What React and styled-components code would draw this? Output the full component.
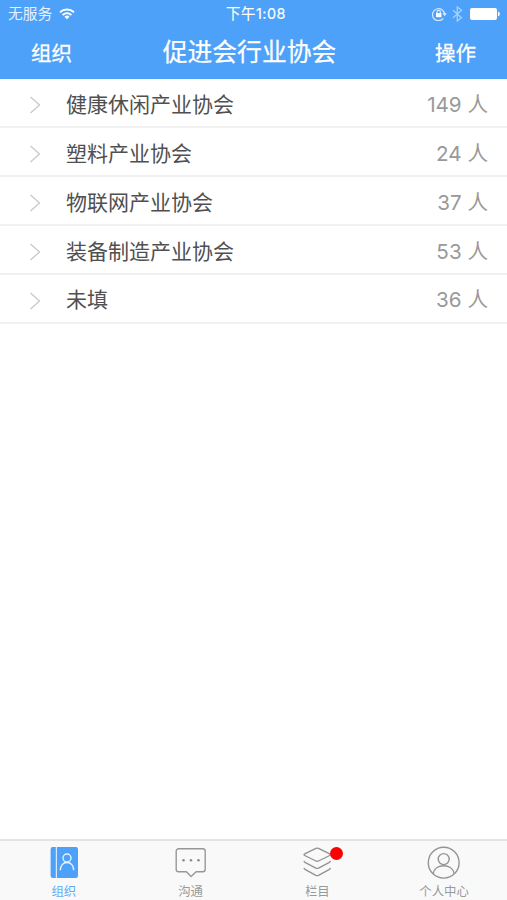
import React from "react";
import styled, { createGlobalStyle } from "styled-components";

const GlobalStyle = createGlobalStyle`
  * { box-sizing: border-box; }
  body {
    margin: 0;
    background: #fff;
    font-family: Inter, "Noto Sans CJK SC", sans-serif;
  }
`;

const Screen = styled.div`
  display: flex;
  flex-direction: column;
  width: 507px;
  height: 900px;
  overflow: hidden;
  background: #fff;
`;

const Header = styled.header`
  height: 79.4px;
  flex: none;
  background: #4ea1f9;
  color: #fff;
`;

const StatusBar = styled.div`
  display: grid;
  grid-template-columns: 1fr auto 1fr;
  align-items: center;
  height: 28px;
  padding: 0 7px 0 8px;
  font-size: 14.7px;
  line-height: 28px;
`;

const Carrier = styled.div`
  display: flex;
  align-items: center;
  gap: 7px;
  color: #e6f2ff;
  svg { margin-bottom: 2px; }
`;

const Clock = styled.div`
  font-size: 14.4px;
  font-weight: 400;
  letter-spacing: 0.5px;
  -webkit-text-stroke: 0.15px #fff;
  padding-left: 4px;
`;

const StatusIcons = styled.div`
  display: flex;
  align-items: center;
  justify-content: flex-end;
  padding-bottom: 1px;
`;

const NavBar = styled.div`
  display: grid;
  grid-template-columns: 1fr auto 1fr;
  align-items: center;
  height: 48px;
  padding: 0 31px;
`;

const NavAction = styled.div`
  padding-top: 2px;
  font-size: 20.5px;
  font-weight: 400;
  line-height: 48px;
  -webkit-text-stroke: 0.3px #fff;
  text-align: ${(p) => p.$align};
`;

const Title = styled.h1`
  margin: 0;
  padding: 0 8px 2px 0;
  font-size: 24.8px;
  font-weight: 400;
  line-height: 48px;
  -webkit-text-stroke: 0.25px #fff;
`;

const List = styled.ul`
  flex: 1;
  margin: 0;
  padding: 0;
  list-style: none;
`;

const Row = styled.li`
  display: flex;
  align-items: center;
  height: 48.9px;
  padding: 0 19px 0 29px;
  border-bottom: 2px solid #f1f1f1;
`;

const Chevron = styled.svg`
  flex: none;
  width: 12px;
  height: 18px;
  margin: 5px 25px 0 0;
`;

const Name = styled.span`
  flex: 1;
  padding-top: 3px;
  color: #505050;
  font-size: 21px;
  line-height: 43px;
`;

const Count = styled.span`
  padding-top: 3px;
  color: #999;
  font-size: 20.6px;
  line-height: 43px;
`;

const TabBar = styled.nav`
  display: grid;
  grid-template-columns: repeat(4, 1fr);
  flex: none;
  height: 61px;
  background: #f9f9f9;
  border-top: 2px solid #e4e4e4;
`;

const Tab = styled.div`
  display: flex;
  flex-direction: column;
  align-items: center;
  padding: 4px 0 0 1px;
  color: ${(p) => (p.$active ? "#62abf8" : "#999")};
  font-size: 12.4px;
  line-height: 22px;
`;

const IconBox = styled.div`
  position: relative;
  width: 36px;
  height: 36px;
  svg { display: block; }
`;

const Badge = styled.span`
  position: absolute;
  top: 2px;
  right: -8px;
  width: 13px;
  height: 13px;
  border-radius: 50%;
  background: #fe0000;
`;

const WifiIcon = () => (
  <svg width="16" height="13" viewBox="0 0 16 13" fill="none" stroke="#fff" strokeWidth="1.9">
    <path d="M1 5.2a10.3 10.3 0 0 1 14 0M3.6 8a6.6 6.6 0 0 1 8.8 0" />
    <path d="M8 12.2 5.5 9.7a3.6 3.6 0 0 1 5 0Z" fill="#fff" stroke="none" />
  </svg>
);

const LockIcon = () => (
  <svg width="15" height="14" viewBox="0 0 15 14" fill="none" stroke="#d5eaff" strokeWidth="1.2">
    <path d="M11.2 11.4A6 6 0 1 1 12.5 7.6" />
    <path d="m10.4 6.3 4.4 0-2.2 3Z" fill="#d5eaff" stroke="none" />
    <rect x="4" y="6" width="5.4" height="4.2" fill="#fff" stroke="none" />
    <path d="M5 6.4V5a1.7 1.7 0 0 1 3.4 0v1.4" />
  </svg>
);

const BluetoothIcon = () => (
  <svg width="11" height="16" viewBox="0 0 11 16" fill="none" stroke="#a5d0fd" strokeWidth="1.3">
    <path d="m1 4.3 8.5 7.4L5.3 15V1l4.2 3.3L1 11.7" />
  </svg>
);

const BatteryIcon = () => (
  <svg width="30" height="12" viewBox="0 0 30 12" fill="#fff">
    <rect width="27" height="12" rx="2" />
    <path d="M28 3.6q1.8.5 1.8 2.4T28 8.4Z" />
  </svg>
);

const BatterySlot = styled.span`
  display: flex;
  margin-left: 7px;
`;

const BluetoothSlot = styled.span`
  display: flex;
  margin-left: 5px;
`;

const ContactsIcon = () => (
  <svg width="36" height="36" viewBox="0 0 36 36" fill="none">
    <rect x="4.6" y="2" width="27.4" height="31" rx="2.2" fill="#4ea1f9" />
    <path d="M10.4 2v31" stroke="#d5eaff" strokeWidth="1.2" />
    <circle cx="21" cy="13" r="4" stroke="#e6f3ff" strokeWidth="1.4" />
    <path d="M14.3 25.2c0-4.6 2.8-7.7 6.7-7.7s6.7 3.1 6.7 7.7" stroke="#e6f3ff" strokeWidth="1.4" />
  </svg>
);

const ChatIcon = () => (
  <svg width="36" height="36" viewBox="0 0 36 36" fill="none" stroke="#989898" strokeWidth="1.4">
    <path d="M5.7 3.7h24a2.500 2.500 0 0 1 2.500 2.500v18a2.500 2.500 0 0 1-2.500 2.500h-6.500L18.100 31.500l-4.700-4.800H5.700a2.500 2.500 0 0 1-2.500-2.500v-18a2.500 2.500 0 0 1 2.500-2.500Z" strokeLinejoin="round" />
    <g fill="#8c8c8c" stroke="none">
      <circle cx="10.500" cy="15.200" r="1.300" />
      <circle cx="18" cy="15.200" r="1.300" />
      <circle cx="25.500" cy="15.200" r="1.300" />
    </g>
  </svg>
);

const LayersIcon = () => (
  <svg width="36" height="36" viewBox="0 0 36 36" fill="none" stroke="#929292" strokeWidth="1.35" strokeLinejoin="round">
    <path d="M16.9 3.4q1.300-.6 2.600 0l11.200 5.500q1.400.8 0 1.600L19.500 16q-1.300.6-2.600 0L5.700 10.500q-1.400-.8 0-1.600Z" />
    <path d="M5 15.900q.2 1 1.400 1.700L16.900 23.100q1.300.6 2.600 0L30 17.600q1.200-.7 1.400-1.700" />
    <path d="M5 22.900q.2 1 1.400 1.700L16.900 30.300q1.300.6 2.600 0L30 24.600q1.200-.7 1.400-1.700" />
  </svg>
);

const ProfileIcon = () => (
  <svg width="36" height="36" viewBox="0 0 36 36" fill="none" stroke="#949494" strokeWidth="1.4">
    <circle cx="17.7" cy="17.7" r="15.4" />
    <circle cx="17.7" cy="14.1" r="5.5" />
    <path d="M7.1 28.8c1-5 5.4-8 10.6-8s9.6 3 10.6 8" />
  </svg>
);

const groups = [
  ["健康休闲产业协会", 149],
  ["塑料产业协会", 24],
  ["物联网产业协会", 37],
  ["装备制造产业协会", 53],
  ["未填", 36],
];

const tabs = [
  { label: "组织", Icon: ContactsIcon, active: true },
  { label: "沟通", Icon: ChatIcon },
  { label: "栏目", Icon: LayersIcon, badge: true },
  { label: "个人中心", Icon: ProfileIcon },
];

export default function App() {
  return (
    <Screen>
      <GlobalStyle />
      <Header>
        <StatusBar>
          <Carrier>无服务<WifiIcon /></Carrier>
          <Clock>下午1:08</Clock>
          <StatusIcons>
            <LockIcon />
            <BluetoothSlot><BluetoothIcon /></BluetoothSlot>
            <BatterySlot><BatteryIcon /></BatterySlot>
          </StatusIcons>
        </StatusBar>
        <NavBar>
          <NavAction $align="left">组织</NavAction>
          <Title>促进会行业协会</Title>
          <NavAction $align="right">操作</NavAction>
        </NavBar>
      </Header>
      <List>
        {groups.map(([name, count]) => (
          <Row key={name}>
            <Chevron viewBox="0 0 12 18" fill="none" stroke="#c8c8c8" strokeWidth="1.3">
              <path d="m1.5 1 9 8-9 8" />
            </Chevron>
            <Name>{name}</Name>
            <Count>{count} 人</Count>
          </Row>
        ))}
      </List>
      <TabBar>
        {tabs.map(({ label, Icon, active, badge }) => (
          <Tab key={label} $active={active}>
            <IconBox>
              <Icon />
              {badge && <Badge />}
            </IconBox>
            {label}
          </Tab>
        ))}
      </TabBar>
    </Screen>
  );
}
